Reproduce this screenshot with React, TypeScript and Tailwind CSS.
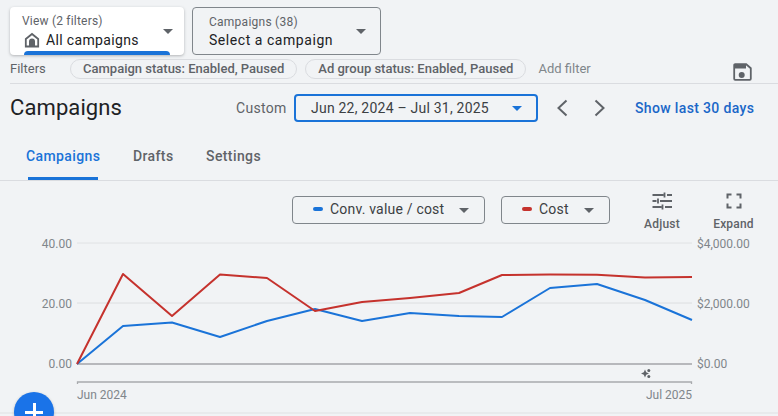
import type { ReactNode } from "react";

const redLine =
  "77,364 123,274 172,316 220,274.5 267,278 315,311 362,302 410,298 459,293 502,275 550,274.5 597,274.7 645,277.5 692,277";
const blueLine =
  "77,364 123,326 172,322.5 220,337 267,321 315,309 362,321 410,313 459,316 502,317 550,288 597,284 645,300 692,320";

function Caret({ className }: { className: string }) {
  return <span className={`h-0 w-0 border-x-[5.5px] border-t-[5.5px] border-x-transparent ${className}`} />;
}

function Chip({ label }: { label: string }) {
  return (
    <span className="flex h-[20px] items-center rounded-full border border-[#dadce0] px-[12px] text-[13px] font-medium text-[#5f6368]">
      {label}
    </span>
  );
}

function MetricPicker({ label, color, width }: { label: string; color: string; width: string }) {
  return (
    <button className={`flex h-[28px] items-center rounded-[4px] border border-[#80868b] pl-[20px] pr-[15px] ${width}`}>
      <span className={`-mt-[2px] h-[4px] w-[10px] rounded-full ${color}`} />
      <span className="-mt-[2px] ml-[7px] text-[14px] tracking-[0.2px] text-[#3c4043]">{label}</span>
      <Caret className="ml-auto border-t-[#5f6368]" />
    </button>
  );
}

function ToolButton({ label, width, margin, children }: { label: string; width: string; margin: string; children: ReactNode }) {
  return (
    <div className={`-mt-[6px] flex flex-col items-center ${width} ${margin}`}>
      {children}
      <span className="mt-[4px] text-[12px] font-medium leading-[16px] tracking-[0.2px] text-[#5f6368]">{label}</span>
    </div>
  );
}

function Chart() {
  return (
    <svg width="778" height="186" viewBox="0 230 778 186" className="block" fontFamily="Roboto, sans-serif">
      <line x1="77" x2="692" y1="243" y2="243" stroke="#e0e2e4" strokeWidth="1" />
      <line x1="77" x2="692" y1="303" y2="303" stroke="#dcdee0" strokeWidth="1" />
      <line x1="77" x2="692" y1="364" y2="364" stroke="#a3a5a8" strokeWidth="1.5" />
      <line x1="0" x2="778" y1="413" y2="413" stroke="#dfe1e3" strokeWidth="1" />
      <path d="M77.5 384V382H691.5V384" fill="none" stroke="#a8aaad" strokeWidth="1.3" />
      <g fill="#80868b" fontSize="12" textAnchor="end">
        <text x="72" y="247.5">40.00</text>
        <text x="72" y="308">20.00</text>
        <text x="72" y="368">0.00</text>
      </g>
      <g fill="#80868b" fontSize="12">
        <text x="697" y="247.5">$4,000.00</text>
        <text x="697" y="308">$2,000.00</text>
        <text x="697" y="368">$0.00</text>
        <text x="77" y="399">Jun 2024</text>
        <text x="692" y="399" textAnchor="end">Jul 2025</text>
      </g>
      <polyline points={blueLine} fill="none" stroke="#1a73d8" strokeWidth="2" strokeLinejoin="round" />
      <polyline points={redLine} fill="none" stroke="#c5322d" strokeWidth="2" strokeLinejoin="round" />
      <g fill="#5f6368">
        <path d="M645 369.5l1.2 2.8 2.8 1.2-2.8 1.2-1.2 2.8-1.2-2.8-2.8-1.2 2.8-1.2z" />
        <circle cx="648.8" cy="370.5" r="1.5" />
        <circle cx="648.8" cy="376.5" r="1.5" />
      </g>
    </svg>
  );
}

export default function App() {
  return (
    <div className="relative flex h-[416px] w-[778px] flex-col overflow-hidden bg-[#f1f3f5] font-['Roboto',sans-serif]">
      <div className="flex gap-[8px] pl-[10px] pt-[7px]">
        <div className="relative h-[48px] w-[174px] overflow-hidden rounded-[4px] bg-white shadow-[0_1px_3px_rgba(60,64,67,0.35)]">
          <div className="pl-[12px] pt-[7px] text-[12px] leading-[15px] tracking-[0.2px] text-[#5f6368]">View (2 filters)</div>
          <div className="flex items-center pl-[14px] pt-[2px]">
            <svg width="16" height="16" viewBox="0 0 16 16" fill="none" stroke="#5f6368" strokeWidth="1.8">
              <path d="M1.8 7 8 2l6.2 5v7.5H1.8z" />
              <path d="M5 14.5V9.5a3 3 0 0 1 6 0v5" fill="#5f6368" stroke="none" />
            </svg>
            <span className="ml-[6px] text-[14px] leading-[18px] tracking-[0.35px] text-[#202124]">All campaigns</span>
          </div>
          <div className="absolute bottom-0 left-[14px] h-[4px] w-[146px] rounded-t-[4px] bg-[#1a73d8]" />
          <div className="absolute right-[11px] top-[22px]">
            <Caret className="block border-t-[#5f6368]" />
          </div>
        </div>
        <div className="relative h-[48px] w-[189px] rounded-[4px] border border-[#80868b]">
          <div className="pl-[16px] pt-[7px] text-[12px] leading-[15px] tracking-[0.25px] text-[#5f6368]">Campaigns (38)</div>
          <div className="pl-[16px] pt-[1px] text-[14px] leading-[18px] tracking-[0.55px] text-[#202124]">Select a campaign</div>
          <div className="absolute right-[14px] top-[21px]">
            <Caret className="block border-t-[#5f6368]" />
          </div>
        </div>
      </div>

      <div className="ml-[10px] mt-[4px] flex h-[25px] items-center border-b border-[#dadce0] pb-[4px]">
        <span className="w-[60px] text-[13px] text-[#5f6368]">Filters</span>
        <Chip label="Campaign status: Enabled, Paused" />
        <span className="w-[8px]" />
        <Chip label="Ad group status: Enabled, Paused" />
        <span className="ml-[12px] text-[13px] text-[#80868b]">Add filter</span>
        <svg className="ml-auto mr-[26px] mt-[3px] self-start" width="20" height="20" viewBox="0 0 20 20" fill="none">
          <path d="M3.2 2.2h11l4.6 4v10.6a1 1 0 0 1-1 1H3.2a1 1 0 0 1-1-1V3.2a1 1 0 0 1 1-1z" stroke="#5f6368" strokeWidth="1.8" />
          <rect x="3" y="3" width="11" height="3.5" fill="#5f6368" />
          <circle cx="9.7" cy="13" r="3" fill="#5f6368" />
        </svg>
      </div>

      <div className="flex h-[48px] items-center pl-[10px]">
        <h1 className="w-[226px] text-[22px] font-normal leading-[28px] tracking-[0.1px] text-[#202124]">Campaigns</h1>
        <span className="w-[58px] text-[14px] tracking-[0.3px] text-[#5f6368]">Custom</span>
        <button className="flex h-[28px] w-[244px] items-center rounded-[4px] border-2 border-[#1a73d8] pl-[15px] pr-[14px]">
          <span className="text-[14px] tracking-[0.22px] text-[#3c4043]">Jun 22, 2024 – Jul 31, 2025</span>
          <Caret className="ml-auto border-t-[#1a73d8]" />
        </button>
        <svg className="ml-[18px]" width="12" height="18" viewBox="0 0 12 18" fill="none" stroke="#5f6368" strokeWidth="2">
          <path d="M10.5 1.5 2.5 9l8 7.5" />
        </svg>
        <svg className="ml-[26px]" width="12" height="18" viewBox="0 0 12 18" fill="none" stroke="#5f6368" strokeWidth="2">
          <path d="M1.5 1.5 9.5 9l-8 7.5" />
        </svg>
        <span className="ml-[29px] text-[14px] font-medium tracking-[0.35px] text-[#1a67c8]">Show last 30 days</span>
      </div>

      <div className="flex h-[49px] gap-[32.5px] border-b border-[#dadce0] pl-[26px]">
        <div className="relative pt-[15px] text-[14px] font-medium leading-[18px] tracking-[0.4px] text-[#1a73d8]">
          Campaigns
          <div className="absolute bottom-0 left-[2px] right-[2px] h-[3px] bg-[#1a73d8]" />
        </div>
        <div className="pt-[15px] text-[14px] font-medium leading-[18px] tracking-[0.4px] text-[#5f6368]">Drafts</div>
        <div className="pt-[15px] text-[14px] font-medium leading-[18px] tracking-[0.4px] text-[#5f6368]">Settings</div>
      </div>

      <div className="flex h-[49px] items-start pl-[292px] pt-[15px]">
        <MetricPicker label="Conv. value / cost" color="bg-[#1a73d8]" width="w-[193px]" />
        <span className="w-[16px]" />
        <MetricPicker label="Cost" color="bg-[#c5322d]" width="w-[109px]" />
        <ToolButton label="Adjust" width="w-[38px]" margin="ml-[33px]">
          <svg width="22" height="22" viewBox="0 0 22 22" fill="none" stroke="#5f6368" strokeWidth="1.8">
            <path d="M1.5 5h11M16 5h5M13.5 2.5v5M1.5 11h4M9 11h12M7 8.5v5M1.5 17h9M14 17h7M11.5 14.5v5" />
          </svg>
        </ToolButton>
        <ToolButton label="Expand" width="w-[41px]" margin="ml-[32px]">
          <svg width="22" height="22" viewBox="0 0 22 22" fill="none" stroke="#5f6368" strokeWidth="2">
            <path d="M4.5 8.5V4.500h4M13.500 4.500h4v4M17.500 13.500v4h-4M8.500 17.500h-4v-4" />
          </svg>
        </ToolButton>
      </div>

      <Chart />

      <button className="absolute left-[14px] top-[392px] flex h-[40px] w-[40px] items-start justify-center rounded-full bg-[#1a73e8] pt-[11px] shadow-[0_1px_3px_rgba(60,64,67,0.3)]">
        <span className="relative block h-[18px] w-[18px]">
          <span className="absolute left-[8px] top-0 h-[18px] w-[2.5px] bg-white" />
          <span className="absolute left-0 top-[8px] h-[2.5px] w-[18px] bg-white" />
        </span>
      </button>
    </div>
  );
}
